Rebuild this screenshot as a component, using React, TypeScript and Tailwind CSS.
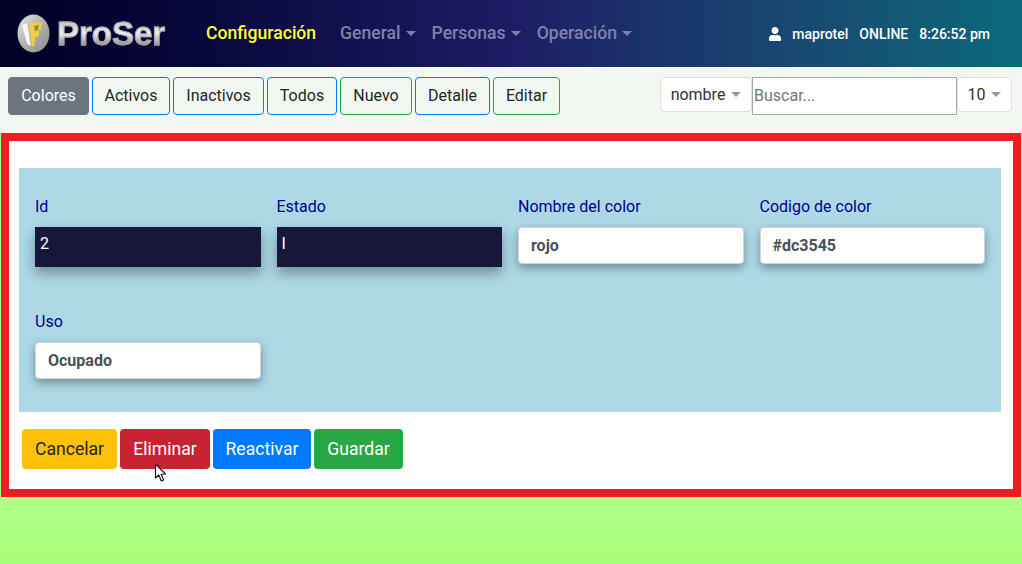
import { FaUser } from "react-icons/fa";

const toolbarButtons = [
    { label: "Colores", className: "w-[81px] bg-[#6c757d] border-[#6c757d] text-white" },
    { label: "Activos", className: "w-[78px] border-[#007bff] text-[#212529]" },
    { label: "Inactivos", className: "w-[91px] border-[#007bff] text-[#212529]" },
    { label: "Todos", className: "w-[70px] border-[#007bff] text-[#212529]" },
    { label: "Nuevo", className: "w-[72px] border-[#28a745] text-[#212529]" },
    { label: "Detalle", className: "w-[75px] border-[#007bff] text-[#212529]" },
    { label: "Editar", className: "w-[67px] border-[#28a745] text-[#212529]" },
];

const actionButtons = [
    { label: "Cancelar", className: "w-[95px] bg-[#ffc107] text-[#212529]" },
    { label: "Eliminar", className: "w-[90px] bg-[#c82333] text-white" },
    { label: "Reactivar", className: "w-[98px] bg-[#007bff] text-white" },
    { label: "Guardar", className: "w-[89px] bg-[#28a745] text-white" },
];

const Caret = ({ className }: { className: string }) => (
    <span className={`inline-block border-x-[5px] border-t-[5px] border-x-transparent ${className}`} />
);

const Logo = () => (
    <div className="flex items-center gap-[7px]">
        <svg width="33" height="39" viewBox="0 0 33 39">
            <defs>
                <linearGradient id="disc" x1="0" y1="0" x2="1" y2="1">
                    <stop offset="0" stopColor="#e8e8e6" />
                    <stop offset="0.5" stopColor="#b0b0ae" />
                    <stop offset="1" stopColor="#8a8a88" />
                </linearGradient>
            </defs>
            <ellipse cx="16.5" cy="19.5" rx="16" ry="19" fill="url(#disc)" />
            <path d="M5 11 L10 9 L14 32 L10 30 Z" fill="#f6f6f2" />
            <path d="M12 9 L25 8 L24 16 L22 16 L22 22 L18 23 L17 33 L15 32 Z" fill="#f0d040" />
            <path d="M17 12 L22 11 L21 16 L18 17 Z" fill="#8d8a60" />
        </svg>
        <span className="bg-gradient-to-b from-[#bdbdbd] via-[#ececec] to-[#6f6f6f] bg-clip-text font-['Liberation_Sans',sans-serif] text-[33px] leading-none font-bold text-transparent [-webkit-text-stroke:0.8px_#a6a6a6]">
            ProSer
        </span>
    </div>
);

const Header = () => (
    <header className="flex h-[67px] items-center bg-gradient-to-r from-[#020024] via-[#1c1c64] via-50% to-[#09697a] pl-[17px] font-['Roboto',sans-serif]">
        <div className="w-[189px]">
            <Logo />
        </div>
        <span className="w-[134px] text-[17.6px] font-medium text-[#ffff33]">Configuración</span>
        <nav className="flex gap-[16px] text-[17.6px] font-medium text-[#8080ab]">
            <span className="flex items-center gap-[5px]">General <Caret className="border-t-[#8080ab]" /></span>
            <span className="flex items-center gap-[5px]">Personas <Caret className="border-t-[#8080ab]" /></span>
            <span className="flex items-center gap-[5px]">Operación <Caret className="border-t-[#8080ab]" /></span>
        </nav>
        <div className="ml-auto flex items-center pr-[32px] text-sm font-medium text-white">
            <FaUser className="mr-[10px] text-[14px]" />
            <span className="mr-[11px]">maprotel</span>
            <span className="mr-[11px]">ONLINE</span>
            <span>8:26:52 pm</span>
        </div>
    </header>
);

const Toolbar = () => (
    <div className="flex h-[66px] items-start bg-[#f2f7f2] pt-[10px] pr-[10px] pl-[8px] font-['Roboto',sans-serif]">
        <div className="flex gap-[3px]">
            {toolbarButtons.map((b) => (
                <button key={b.label} className={`h-[38px] rounded border text-center text-base ${b.className}`}>
                    {b.label}
                </button>
            ))}
        </div>
        <div className="ml-auto flex items-start">
            <div className="flex h-[35px] w-[92px] items-center justify-center gap-[6px] rounded border border-[#dddddd] bg-white text-base text-[#333333]">
                nombre <Caret className="border-t-[#999999]" />
            </div>
            <div className="flex h-[38px] w-[205px] items-center border border-[#a9a9a9] bg-white pl-px text-base text-[#757575]">
                Buscar...
            </div>
            <div className="flex h-[35px] w-[55px] items-center justify-center gap-[6px] rounded border border-[#dddddd] bg-white text-base text-[#333333]">
                10 <Caret className="border-t-[#999999]" />
            </div>
        </div>
    </div>
);

const Field = ({ label, value, dark }: { label: string; value: string; dark?: boolean }) => (
    <div>
        <div className="mb-[8px] h-[24px] leading-[24px] text-[#00008b]">{label}</div>
        {dark ? (
            <div className="h-10 bg-[#17173a] pt-[5px] pl-[5px] text-white shadow-[0_6px_12px_rgba(0,0,0,0.35)]">{value}</div>
        ) : (
            <div className="flex h-[37px] items-center rounded border border-[#ced4da] bg-white pl-[12px] font-bold text-[#495057] shadow-[0_4px_10px_rgba(0,0,0,0.35)]">
                {value}
            </div>
        )}
    </div>
);

const FormPanel = () => (
    <section className="mx-px h-[364px] border-[8px] border-[#ed1c24] bg-white pt-[27px] pr-[12px] pl-[10px] font-['Roboto',sans-serif] text-base">
        <div className="h-[244px] bg-[#add8e6] px-4 pt-[27px]">
            <div className="grid grid-cols-4 gap-x-4 gap-y-[43px]">
                <Field label="Id" value="2" dark />
                <Field label="Estado" value="I" dark />
                <Field label="Nombre del color" value="rojo" />
                <Field label="Codigo de color" value="#dc3545" />
                <Field label="Uso" value="Ocupado" />
            </div>
        </div>
        <div className="mt-[17px] ml-[3px] flex gap-[3px]">
            {actionButtons.map((b, i) => (
                <button key={b.label} className={`relative h-10 rounded text-center text-[17.6px] ${b.className}`}>
                    {b.label}
                    {i === 1 && (
                        <svg className="absolute top-[34px] left-[34px]" width="13" height="20" viewBox="0 0 13 20">
                            <path d="M1.5 1 L1.5 15 L4.8 12 L7.3 18 L9.6 17 L7.2 11.2 L11.5 11 Z" fill="#ffffff" stroke="#111111" strokeWidth="1.1" strokeLinejoin="round" />
                        </svg>
                    )}
                </button>
            ))}
        </div>
    </section>
);

export default function App() {
    return (
        <div className="h-[564px] overflow-hidden bg-gradient-to-b from-[#b0ff88] from-[88%] to-[#a8ff78]">
            <Header />
            <Toolbar />
            <FormPanel />
        </div>
    );
}
